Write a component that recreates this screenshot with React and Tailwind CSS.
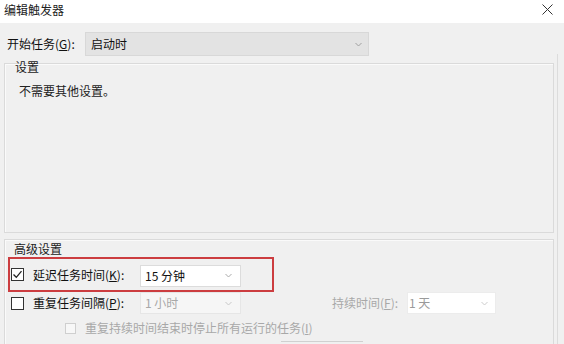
import React from "react";

const Chevron = ({ color = "#8a8a8a" }) => (
  <svg width="7" height="5" viewBox="0 0 7 5" className="shrink-0">
    <path d="M0.5 1 L3.5 4 L6.5 1" fill="none" stroke={color} strokeWidth="1" />
  </svg>
);

const CheckBox = ({ checked, disabled, size = 13 }) => (
  <div
    className={
      disabled
        ? "w-[11px] h-[11px] border border-[#cfcfcf] bg-[#f7f7f7] shrink-0"
        : "w-[13px] h-[13px] border border-[#333333] bg-white shrink-0 flex items-center justify-center"
    }
  >
    {checked && (
      <svg width="11" height="11" viewBox="0 0 11 11">
        <path d="M1.5 5.5 L4.3 8.3 L9.5 2.2" fill="none" stroke="#222" strokeWidth="1.3" />
      </svg>
    )}
  </div>
);

export default function App() {
  return (
    <div
      className="w-[564px] h-[344px] overflow-hidden bg-[#f0f0f0] text-[12px] leading-[14px] text-[#111]"
      style={{ fontFamily: '"Noto Sans CJK SC", "Noto Sans", sans-serif' }}
    >
      {/* title bar */}
      <div className="h-[23px] bg-white flex items-center justify-between pl-[4px] pr-[11px]">
        <span className="mt-[-4px] text-[#222]">编辑触发器</span>
        <svg width="11" height="11" viewBox="0 0 11 11" className="mt-[-5px]">
          <path d="M0.5 0.5 L10.5 10.5 M10.5 0.5 L0.5 10.5" stroke="#333" strokeWidth="1" />
        </svg>
      </div>

      {/* start task row */}
      <div className="mt-[9px] h-[24px] flex items-center pl-[7px]">
        <span className="w-[78px]">开始任务(<u>G</u>):</span>
        <div className="w-[284px] h-[24px] bg-[#e3e3e3] border border-[#d8d8d8] flex items-center justify-between pl-[5px] pr-[6px]">
          <span>启动时</span>
          <Chevron color="#a0a0a0" />
        </div>
      </div>

      <div className="flex">
        <div className="flex flex-col">
          {/* settings group */}
          <div className="mt-[7px] ml-[4px] w-[550px] h-[170px] border border-[#dadada] shadow-[inset_1px_1px_0_#fafafa] pl-[10px]">
            <div className="mt-[-4px] text-[#222]">设置</div>
            <div className="mt-[10px] pl-[4px] text-[#222]">不需要其他设置。</div>
          </div>

          {/* advanced group */}
          <div className="mt-[6px] ml-[4px] w-[550px] h-[120px] border border-[#dadada] shadow-[inset_1px_1px_0_#fafafa]">
            <div className="mt-[2px] pl-[9px] text-[#222]">高级设置</div>

            <div className="mt-[1px] ml-[3px] w-[266px] h-[35px] border-2 border-[#cc3d40] flex items-center pl-[1px]">
              <CheckBox checked />
              <span className="ml-[9px] w-[107px]">延迟任务时间(<u>K</u>):</span>
              <div className="w-[101px] h-[22px] mt-[2px] bg-white border border-[#dcdcdc] flex items-center justify-between pl-[4px] pr-[8px]">
                <span>15 分钟</span>
                <Chevron color="#aaaaaa" />
              </div>
            </div>

            <div className="h-[22px] flex items-center pl-[6px]">
              <CheckBox />
              <span className="ml-[9px] w-[107px]">重复任务间隔(<u>P</u>):</span>
              <div className="w-[101px] h-[22px] bg-[#f6f6f6] border border-[#e6e6e6] flex items-center justify-between pl-[4px] pr-[8px] text-[#a8a8a8]">
                <span>1 小时</span>
                <Chevron color="#c8c8c8" />
              </div>
              <span className="ml-[91px] w-[75px] text-[#a8a8a8]">持续时间(<u>F</u>):</span>
              <div className="w-[89px] h-[22px] bg-white border border-[#ececec] flex items-center justify-between pl-[1px] pr-[7px] text-[#9a9a9a]">
                <span>1 天</span>
                <Chevron color="#cccccc" />
              </div>
            </div>

            <div className="mt-[5px] h-[18px] flex items-center pl-[60px] text-[#a8a8a8]">
              <CheckBox disabled />
              <span className="ml-[9px]">重复持续时间结束时停止所有运行的任务(<u>I</u>)</span>
            </div>

            <div className="mt-[4px] ml-[276px] w-[82px] h-[1px] bg-[#d0d0d0]" />
          </div>
        </div>
        <div className="ml-[3px] mt-[-2px] w-[1px] h-[290px] bg-[#dcdcdc]" />
      </div>
    </div>
  );
}
